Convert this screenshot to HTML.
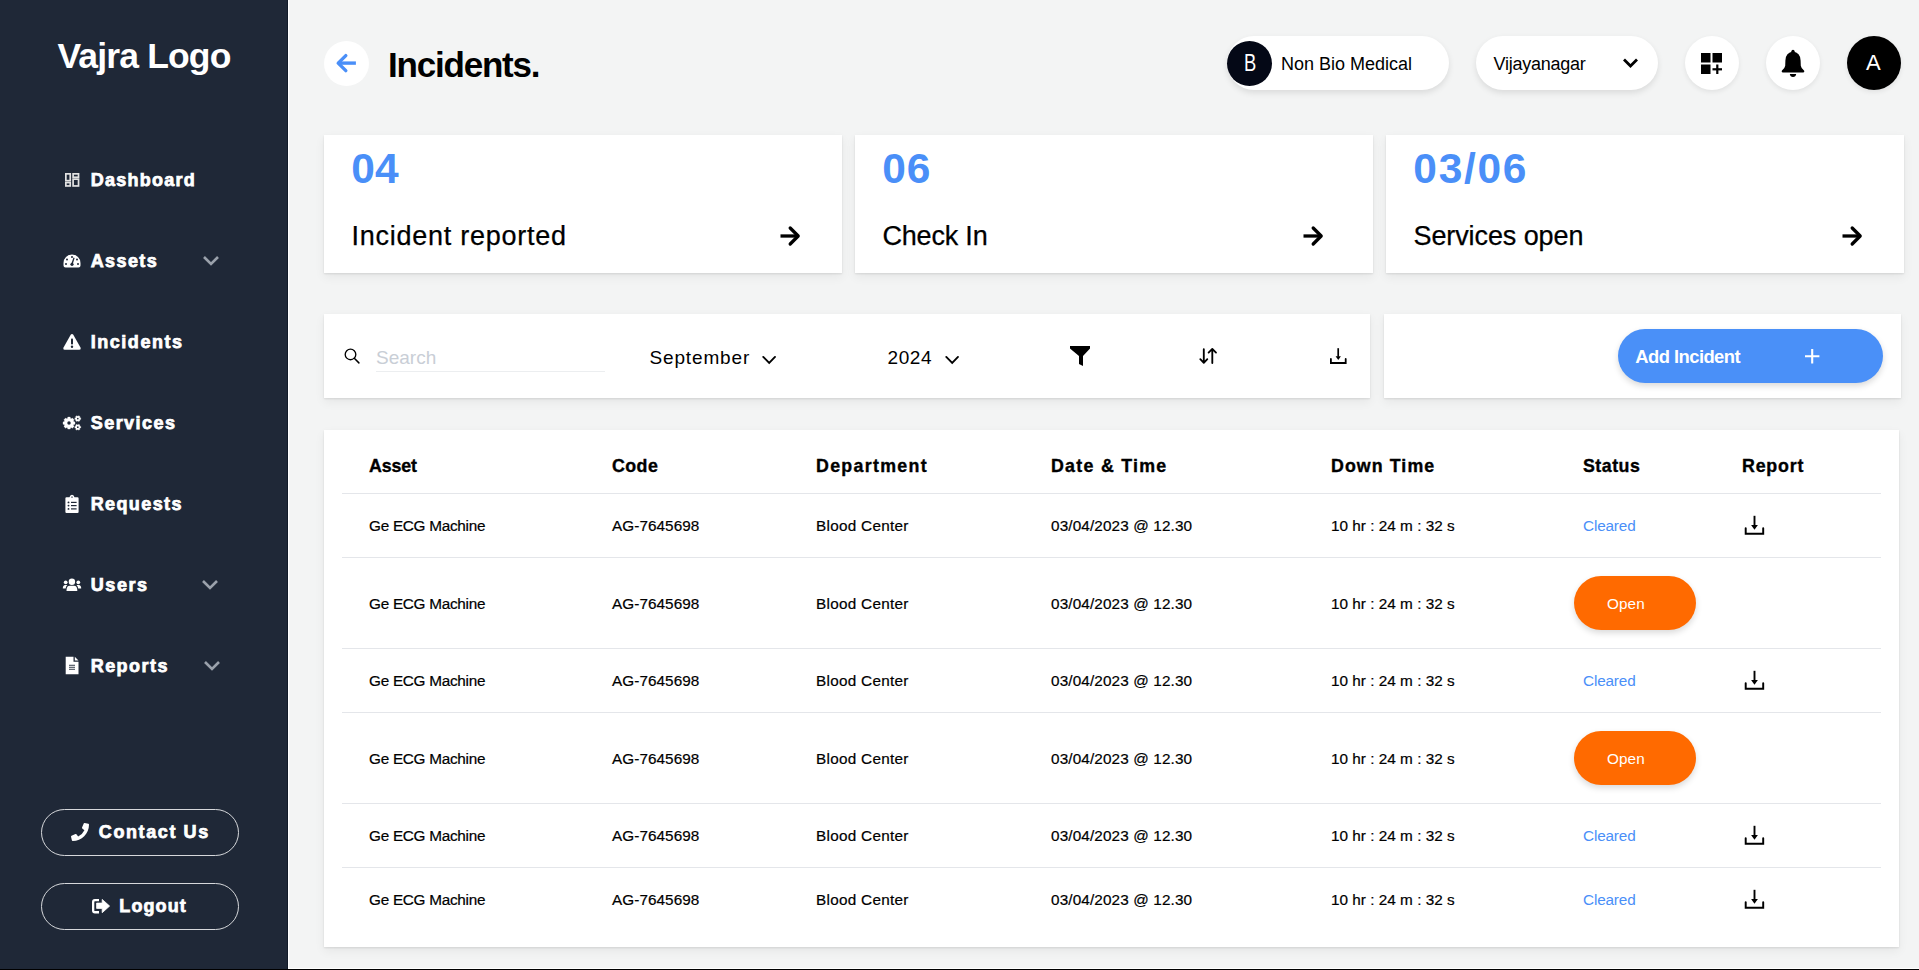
<!DOCTYPE html>
<html><head><meta charset="utf-8"><title>Incidents</title>
<style>
html,body{margin:0;padding:0;}
body{width:1919px;height:970px;overflow:hidden;position:relative;background:#f3f4f4;font-family:"Liberation Sans", sans-serif;}
.t{position:absolute;white-space:nowrap;}
.b{position:absolute;display:block;box-sizing:border-box;}
svg.b{overflow:visible;}
</style></head><body>
<div class="b" style="left:0px;top:0px;width:288px;height:970px;background:#1f2837;"></div><div class="b" style="left:287px;top:0px;width:1px;height:969px;background:#111a28;"></div><div class="b" style="left:288px;top:0px;width:1px;height:969px;background:#fff;"></div><div class="b" style="left:288px;top:968px;width:1631px;height:1px;background:#fff;"></div><div class="b" style="left:0px;top:969px;width:1919px;height:1px;background:#000;"></div><div class="t" style="left:57.5px;top:38.95px;font-size:35.5px;line-height:35.5px;font-weight:700;color:#fff;letter-spacing:-0.85px;">Vajra Logo</div><div class="t" style="left:90.7px;top:171.26px;font-size:18px;line-height:18px;font-weight:700;color:#fff;letter-spacing:1.25px;-webkit-text-stroke:0.75px #fff;">Dashboard</div><div class="t" style="left:90.7px;top:252.26px;font-size:18px;line-height:18px;font-weight:700;color:#fff;letter-spacing:1.4px;-webkit-text-stroke:0.75px #fff;">Assets</div><svg class="b" style="left:202px;top:254.7px;" width="18" height="12" viewBox="0 0 18 12"><path d="M2 2 L9 9 L16 2" fill="none" stroke="#9aa1ab" stroke-width="2.6" stroke-linecap="butt"/></svg><div class="t" style="left:90.7px;top:333.26px;font-size:18px;line-height:18px;font-weight:700;color:#fff;letter-spacing:1.54px;-webkit-text-stroke:0.75px #fff;">Incidents</div><div class="t" style="left:90.7px;top:414.26px;font-size:18px;line-height:18px;font-weight:700;color:#fff;letter-spacing:1.47px;-webkit-text-stroke:0.75px #fff;">Services</div><div class="t" style="left:90.7px;top:495.26px;font-size:18px;line-height:18px;font-weight:700;color:#fff;letter-spacing:1.39px;-webkit-text-stroke:0.75px #fff;">Requests</div><div class="t" style="left:90.7px;top:576.26px;font-size:18px;line-height:18px;font-weight:700;color:#fff;letter-spacing:1.6px;-webkit-text-stroke:0.75px #fff;">Users</div><svg class="b" style="left:201px;top:578.7px;" width="18" height="12" viewBox="0 0 18 12"><path d="M2 2 L9 9 L16 2" fill="none" stroke="#9aa1ab" stroke-width="2.6" stroke-linecap="butt"/></svg><div class="t" style="left:90.7px;top:657.26px;font-size:18px;line-height:18px;font-weight:700;color:#fff;letter-spacing:1.45px;-webkit-text-stroke:0.75px #fff;">Reports</div><svg class="b" style="left:202.8px;top:659.7px;" width="18" height="12" viewBox="0 0 18 12"><path d="M2 2 L9 9 L16 2" fill="none" stroke="#9aa1ab" stroke-width="2.6" stroke-linecap="butt"/></svg><svg class="b" style="left:64.6px;top:173px;" width="14.4" height="13.8" viewBox="0 0 14.4 13.8"><g fill="none" stroke="#e2e2e2" stroke-width="1.7"><rect x="0.85" y="0.85" width="4.4" height="6.8"/><rect x="8.1" y="0.85" width="5.45" height="3.4"/><rect x="0.85" y="9.55" width="4.4" height="3.4"/><rect x="8.1" y="6.15" width="5.45" height="6.8"/></g></svg><svg class="b" style="left:63px;top:254px;" width="18" height="14" viewBox="0 0 18 14"><path d="M9 0.5 A8.5 8.5 0 0 0 0.5 9 L0.5 11.5 Q0.5 13.5 2.5 13.5 L15.5 13.5 Q17.5 13.5 17.5 11.5 L17.5 9 A8.5 8.5 0 0 0 9 0.5 Z" fill="#fff"/><g fill="#1f2837"><circle cx="4" cy="5.5" r="1"/><circle cx="9" cy="3" r="1"/><circle cx="3" cy="10" r="1"/><circle cx="15" cy="10" r="1"/><circle cx="14" cy="5.5" r="1"/><path d="M10.5 3.5 L11.6 4 L9.8 10 L8.2 10 Z"/><circle cx="9" cy="10.3" r="1.6"/></g></svg><svg class="b" style="left:63px;top:333px;" width="18" height="18" viewBox="0 0 18 18"><path d="M9 1 Q9.8 1 10.3 1.8 L17.6 14.8 Q18.2 16.6 16.4 16.8 L1.6 16.8 Q-0.2 16.6 0.4 14.8 L7.7 1.8 Q8.2 1 9 1 Z" fill="#fff"/><rect x="8" y="5.5" width="2" height="6" rx="0.8" fill="#1f2837"/><circle cx="9" cy="13.8" r="1.2" fill="#1f2837"/></svg><svg class="b" style="left:58px;top:409px;" width="30" height="30" viewBox="0 0 30 30"><polygon points="15.66,12.59 16.98,12.91 16.98,15.29 15.66,15.61 15.37,16.32 16.07,17.49 14.39,19.17 13.22,18.47 12.51,18.76 12.19,20.08 9.81,20.08 9.49,18.76 8.78,18.47 7.61,19.17 5.93,17.49 6.63,16.32 6.34,15.61 5.02,15.29 5.02,12.91 6.34,12.59 6.63,11.88 5.93,10.71 7.61,9.03 8.78,9.73 9.49,9.44 9.81,8.12 12.19,8.12 12.51,9.44 13.22,9.73 14.39,9.03 16.07,10.71 15.37,11.88" fill="#fff" stroke="#fff" stroke-width="0.3" stroke-linejoin="round"/><circle cx="11" cy="14.1" r="1.75" fill="#1f2837"/><polygon points="21.92,8.72 22.75,8.81 22.75,10.39 21.92,10.48 21.62,11.00 21.96,11.76 20.59,12.55 20.10,11.88 19.50,11.88 19.01,12.55 17.64,11.76 17.98,11.00 17.68,10.48 16.85,10.39 16.85,8.81 17.68,8.72 17.98,8.20 17.64,7.44 19.01,6.65 19.50,7.32 20.10,7.32 20.59,6.65 21.96,7.44 21.62,8.20" fill="#fff" stroke="#fff" stroke-width="0.3" stroke-linejoin="round"/><circle cx="19.8" cy="9.6" r="0.85" fill="#1f2837"/><polygon points="21.92,17.32 22.75,17.41 22.75,18.99 21.92,19.08 21.62,19.60 21.96,20.36 20.59,21.15 20.10,20.48 19.50,20.48 19.01,21.15 17.64,20.36 17.98,19.60 17.68,19.08 16.85,18.99 16.85,17.41 17.68,17.32 17.98,16.80 17.64,16.04 19.01,15.25 19.50,15.92 20.10,15.92 20.59,15.25 21.96,16.04 21.62,16.80" fill="#fff" stroke="#fff" stroke-width="0.3" stroke-linejoin="round"/><circle cx="19.8" cy="18.2" r="0.85" fill="#1f2837"/></svg><svg class="b" style="left:65px;top:494px;" width="14" height="19" viewBox="0 0 14 19"><path d="M1.5 3.2 L4.5 3.2 Q5 0.7 7 0.7 Q9 0.7 9.5 3.2 L12.5 3.2 Q13.6 3.2 13.6 4.3 L13.6 17.9 Q13.6 19 12.5 19 L1.5 19 Q0.4 19 0.4 17.9 L0.4 4.3 Q0.4 3.2 1.5 3.2 Z" fill="#fff"/><g fill="#1f2837"><ellipse cx="7" cy="3.1" rx="0.9" ry="0.55"/><circle cx="3.5" cy="8.4" r="0.95"/><circle cx="3.5" cy="11.6" r="0.95"/><circle cx="3.5" cy="14.9" r="0.95"/><rect x="6" y="7.8" width="5.6" height="1.2"/><rect x="6" y="11" width="5.6" height="1.2"/><rect x="6" y="14.3" width="5.6" height="1.2"/></g></svg><svg class="b" style="left:63px;top:578px;" width="19" height="14" viewBox="0 0 19 14"><g fill="#fff"><circle cx="8.9" cy="3.8" r="3.2"/><circle cx="2.7" cy="4.3" r="1.85"/><circle cx="15.3" cy="4.3" r="1.85"/><path d="M3.5 13.1 Q3.3 7.8 6.8 7.8 L11 7.8 Q14.5 7.8 14.3 13.1 Z"/><path d="M-0.2 10.6 Q-0.2 7.1 2.3 7.1 L4.3 7.1 Q2.9 8.3 2.6 10.6 Z"/><path d="M18.2 10.6 Q18.2 7.1 15.7 7.1 L13.5 7.1 Q14.9 8.3 15.2 10.6 Z"/></g></svg><svg class="b" style="left:65px;top:656px;" width="14" height="19" viewBox="0 0 14 19"><path d="M0.7 0.7 L8.5 0.7 L8.5 5.8 L13.5 5.8 L13.5 18.3 L0.7 18.3 Z" fill="#fff"/><path d="M9.8 0.7 L13.5 4.5 L9.8 4.5 Z" fill="#fff"/><g fill="#1f2837"><rect x="4" y="8.8" width="6" height="0.9"/><rect x="4" y="10.8" width="6" height="0.9"/><rect x="4" y="12.8" width="6" height="0.9"/></g></svg><div class="b" style="left:41px;top:809px;width:198px;height:47px;border:1px solid #d6d8db;border-radius:24px;"></div><div class="b" style="left:41px;top:883px;width:198px;height:47px;border:1px solid #d6d8db;border-radius:24px;"></div><div class="t" style="left:98.8px;top:823.36px;font-size:18px;line-height:18px;font-weight:700;color:#fff;letter-spacing:1.6px;-webkit-text-stroke:0.75px #fff;">Contact Us</div><div class="t" style="left:119.3px;top:897.36px;font-size:18px;line-height:18px;font-weight:700;color:#fff;letter-spacing:1.1px;-webkit-text-stroke:0.75px #fff;">Logout</div><svg class="b" style="left:71px;top:823px;" width="18" height="18" viewBox="0 0 512 512"><path fill="#fff" d="M497.4 361.8l-112-48a24 24 0 0 0-28 6.9l-49.6 60.6A370.7 370.7 0 0 1 130.6 204.1l60.6-49.6a23.9 23.9 0 0 0 6.9-28l-48-112A24.2 24.2 0 0 0 122.6.6l-104 24A24 24 0 0 0 0 48c0 256.5 207.9 464 464 464a24 24 0 0 0 23.4-18.6l24-104a24.3 24.3 0 0 0-14-27.6z" transform="translate(512 0) scale(-1 1)"/></svg><svg class="b" style="left:88px;top:893px;" width="26" height="26" viewBox="0 0 26 26"><path d="M11 7.15 L6.9 7.15 Q5.15 7.15 5.15 8.9 L5.15 17.5 Q5.15 19.25 6.9 19.25 L11 19.25" fill="none" stroke="#fff" stroke-width="2.3"/><path d="M8.6 10.1 L14.2 10.1 L14.2 6.4 L21.6 13.05 L14.2 19.7 L14.2 15.4 L8.6 15.4 Z" fill="#fff" stroke="#fff" stroke-width="0.8" stroke-linejoin="round"/></svg><div class="b" style="left:289px;top:0px;width:1630px;height:968px;background:#f3f4f4;"></div><div class="b" style="left:324px;top:41px;width:45px;height:45px;background:#fff;border-radius:50%;"></div><svg class="b" style="left:326px;top:43px;" width="40" height="40" viewBox="0 0 40 40"><path d="M13 20.1 L29.9 20.1" fill="none" stroke="#4a8ff8" stroke-width="3.4"/><path d="M19.8 12.6 L12.2 20.1 L19.8 27.6" fill="none" stroke="#4a8ff8" stroke-width="3.4" stroke-linecap="round" stroke-linejoin="round"/></svg><div class="t" style="left:388px;top:46.77px;font-size:35px;line-height:35px;font-weight:700;color:#000;letter-spacing:-1.2px;">Incidents.</div><div class="b" style="left:1227px;top:36px;width:222px;height:54px;background:#fff;border-radius:27px;box-shadow:0 3px 6px rgba(0,0,0,0.10);"></div><div class="b" style="left:1227px;top:41px;width:45px;height:45px;background:#040816;border-radius:50%;"></div><div class="t" style="left:1243.9px;top:51.73px;font-size:23px;line-height:23px;font-weight:400;color:#fff;transform:scaleX(0.8);transform-origin:0 0;">B</div><div class="t" style="left:1281px;top:55.06px;font-size:18px;line-height:18px;font-weight:400;color:#000;">Non Bio Medical</div><div class="b" style="left:1476px;top:36px;width:182px;height:54px;background:#fff;border-radius:27px;box-shadow:0 3px 6px rgba(0,0,0,0.10);"></div><div class="t" style="left:1493.5px;top:54.76px;font-size:18px;line-height:18px;font-weight:400;color:#000;letter-spacing:-0.25px;">Vijayanagar</div><svg class="b" style="left:1622px;top:57px;" width="17" height="12" viewBox="0 0 17 12"><path d="M2 2.5 L8.5 9 L15 2.5" fill="none" stroke="#000" stroke-width="2.8"/></svg><div class="b" style="left:1685px;top:36px;width:54px;height:54px;background:#fff;border-radius:50%;box-shadow:0 2px 5px rgba(0,0,0,0.08);"></div><svg class="b" style="left:1701px;top:53px;" width="21" height="21" viewBox="0 0 21 21"><g fill="#000"><rect x="0" y="0" width="9.5" height="9.5"/><rect x="11.5" y="0" width="9.5" height="9.5"/><rect x="0" y="11.5" width="9.5" height="9.5"/><rect x="15.2" y="11.5" width="2.2" height="9.5"/><rect x="11.5" y="15.2" width="9.5" height="2.2"/></g></svg><div class="b" style="left:1766px;top:36px;width:54px;height:54px;background:#fff;border-radius:50%;box-shadow:0 2px 5px rgba(0,0,0,0.08);"></div><svg class="b" style="left:1780.6px;top:49px;" width="24" height="29" viewBox="0 0 24 29"><circle cx="12" cy="2.3" r="1.6" fill="#000"/><path fill="#000" d="M12 2.6 Q19.3 3.6 19.6 11.5 L19.8 16.8 Q20.2 19.6 23 21.4 Q23.6 22 23.2 22.8 Q23 23.4 22.2 23.4 L1.8 23.4 Q1 23.4 0.8 22.8 Q0.4 22 1 21.4 Q3.8 19.6 4.2 16.8 L4.4 11.5 Q4.7 3.6 12 2.6 Z M8.8 25 L15.2 25 Q14.8 28 12 28 Q9.2 28 8.8 25 Z"/></svg><div class="b" style="left:1847px;top:36px;width:54px;height:54px;background:#000;border-radius:50%;box-shadow:0 2px 5px rgba(0,0,0,0.08);"></div><div class="t" style="left:1866px;top:52.38px;font-size:22px;line-height:22px;font-weight:400;color:#fff;">A</div><div class="b" style="left:324px;top:135px;width:518px;height:138px;background:#fff;box-shadow:0 1px 2px rgba(0,0,0,0.10),0 4px 10px rgba(0,0,0,0.06);"></div><div class="t" style="left:351.3px;top:147.82px;font-size:42.5px;line-height:42.5px;font-weight:700;color:#4a8ff8;">04</div><div class="t" style="left:351.5px;top:223.04px;font-size:27px;line-height:27px;font-weight:400;color:#000;letter-spacing:0.75px;-webkit-text-stroke:0.25px #000;">Incident reported</div><svg class="b" style="left:770px;top:216px;" width="40" height="40" viewBox="0 0 40 40"><path d="M10.5 20 L27 20" fill="none" stroke="#000" stroke-width="3.3"/><path d="M20.2 12 L28.2 20 L20.2 28" fill="none" stroke="#000" stroke-width="3.3" stroke-linecap="round" stroke-linejoin="round"/></svg><div class="b" style="left:855px;top:135px;width:518px;height:138px;background:#fff;box-shadow:0 1px 2px rgba(0,0,0,0.10),0 4px 10px rgba(0,0,0,0.06);"></div><div class="t" style="left:882.3px;top:147.82px;font-size:42.5px;line-height:42.5px;font-weight:700;color:#4a8ff8;letter-spacing:0.8px;">06</div><div class="t" style="left:882.5px;top:223.04px;font-size:27px;line-height:27px;font-weight:400;color:#000;letter-spacing:-0.2px;-webkit-text-stroke:0.25px #000;">Check In</div><svg class="b" style="left:1292.7px;top:216px;" width="40" height="40" viewBox="0 0 40 40"><path d="M10.5 20 L27 20" fill="none" stroke="#000" stroke-width="3.3"/><path d="M20.2 12 L28.2 20 L20.2 28" fill="none" stroke="#000" stroke-width="3.3" stroke-linecap="round" stroke-linejoin="round"/></svg><div class="b" style="left:1386px;top:135px;width:518px;height:138px;background:#fff;box-shadow:0 1px 2px rgba(0,0,0,0.10),0 4px 10px rgba(0,0,0,0.06);"></div><div class="t" style="left:1413.3px;top:147.82px;font-size:42.5px;line-height:42.5px;font-weight:700;color:#4a8ff8;letter-spacing:1.7px;">03/06</div><div class="t" style="left:1413.5px;top:223.04px;font-size:27px;line-height:27px;font-weight:400;color:#000;letter-spacing:-0.1px;-webkit-text-stroke:0.25px #000;">Services open</div><svg class="b" style="left:1831.8px;top:216px;" width="40" height="40" viewBox="0 0 40 40"><path d="M10.5 20 L27 20" fill="none" stroke="#000" stroke-width="3.3"/><path d="M20.2 12 L28.2 20 L20.2 28" fill="none" stroke="#000" stroke-width="3.3" stroke-linecap="round" stroke-linejoin="round"/></svg><div class="b" style="left:324px;top:314px;width:1046px;height:84px;background:#fff;box-shadow:0 1px 2px rgba(0,0,0,0.10),0 4px 10px rgba(0,0,0,0.06);"></div><svg class="b" style="left:344px;top:348px;" width="16" height="16" viewBox="0 0 16 16"><circle cx="6.5" cy="6.4" r="5.3" fill="none" stroke="#000" stroke-width="1.35"/><path d="M10.3 10.3 L14.9 14.9" stroke="#000" stroke-width="1.5" stroke-linecap="round"/></svg><div class="t" style="left:376px;top:347.92px;font-size:19px;line-height:19px;font-weight:400;color:#c9ced6;">Search</div><div class="b" style="left:376px;top:371px;width:229px;height:1px;background:#eceef0;"></div><div class="t" style="left:649.5px;top:347.72px;font-size:19px;line-height:19px;font-weight:400;color:#000;letter-spacing:0.85px;">September</div><svg class="b" style="left:761px;top:355px;" width="16" height="10" viewBox="0 0 16 10"><path d="M2.25 1.9 L8.2 7.8 L14 1.9" fill="none" stroke="#000" stroke-width="1.9" stroke-linecap="round"/></svg><div class="t" style="left:887.5px;top:347.72px;font-size:19px;line-height:19px;font-weight:400;color:#000;letter-spacing:0.6px;">2024</div><svg class="b" style="left:944.3px;top:355px;" width="16" height="10" viewBox="0 0 16 10"><path d="M2.25 1.9 L8.2 7.8 L14 1.9" fill="none" stroke="#000" stroke-width="1.9" stroke-linecap="round"/></svg><svg class="b" style="left:1069px;top:345px;" width="22" height="22" viewBox="0 0 22 22"><path d="M1 1 L21 1 L21 3.5 L14 11 L14 21 L10 19 L10 11 L1 3.5 Z" fill="#000"/></svg><svg class="b" style="left:1193px;top:341px;" width="30" height="30" viewBox="0 0 30 30"><g fill="none" stroke="#000" stroke-width="1.85" stroke-linecap="round" stroke-linejoin="round"><path d="M10.8 8.2 L10.8 21.6 M7.3 18.2 L10.8 21.8 L14.3 18.2"/><path d="M19.3 22 L19.3 8.3 M15.6 11.6 L19.3 7.9 L23 11.6"/></g></svg><svg class="b" style="left:1323px;top:341px;" width="30" height="30" viewBox="0 0 30 30"><path d="M15.2 7.2 L15.2 15.8" fill="none" stroke="#000" stroke-width="1.7"/><path d="M12.6 15.2 L17.9 15.2 L15.25 18.9 Z" fill="#000"/><path d="M7.9 17.9 L7.9 22 L22.7 22 L22.7 17.9" fill="none" stroke="#000" stroke-width="1.8" stroke-linecap="round"/></svg><div class="b" style="left:1384px;top:314px;width:517px;height:84px;background:#fff;box-shadow:0 1px 2px rgba(0,0,0,0.10),0 4px 10px rgba(0,0,0,0.06);"></div><div class="b" style="left:1618px;top:329px;width:265px;height:54px;background:#4a90f8;border-radius:27px;box-shadow:0 3px 6px rgba(0,0,0,0.15);"></div><div class="t" style="left:1635.3px;top:347.82px;font-size:18.4px;line-height:18.4px;font-weight:700;color:#fff;letter-spacing:-0.55px;">Add Incident</div><svg class="b" style="left:1805px;top:349.3px;" width="14.4" height="14.4" viewBox="0 0 14.4 14.4"><path d="M7.2 0 L7.2 14.4 M0 7.2 L14.4 7.2" stroke="#fff" stroke-width="2.1"/></svg><div class="b" style="left:324px;top:430px;width:1575px;height:517px;background:#fff;box-shadow:0 1px 2px rgba(0,0,0,0.10),0 4px 10px rgba(0,0,0,0.06);"></div><div class="t" style="left:369px;top:458.13px;font-size:17.8px;line-height:17.8px;font-weight:700;color:#000;letter-spacing:-0.14px;-webkit-text-stroke:0.35px #000;">Asset</div><div class="t" style="left:612px;top:458.13px;font-size:17.8px;line-height:17.8px;font-weight:700;color:#000;letter-spacing:0.45000000000000007px;-webkit-text-stroke:0.35px #000;">Code</div><div class="t" style="left:816px;top:458.13px;font-size:17.8px;line-height:17.8px;font-weight:700;color:#000;letter-spacing:1.3099999999999998px;-webkit-text-stroke:0.35px #000;">Department</div><div class="t" style="left:1051px;top:458.13px;font-size:17.8px;line-height:17.8px;font-weight:700;color:#000;letter-spacing:1.2799999999999998px;-webkit-text-stroke:0.35px #000;">Date &amp; Time</div><div class="t" style="left:1331px;top:458.13px;font-size:17.8px;line-height:17.8px;font-weight:700;color:#000;letter-spacing:1.0799999999999998px;-webkit-text-stroke:0.35px #000;">Down Time</div><div class="t" style="left:1583px;top:458.13px;font-size:17.8px;line-height:17.8px;font-weight:700;color:#000;letter-spacing:0.49px;-webkit-text-stroke:0.35px #000;">Status</div><div class="t" style="left:1742px;top:458.13px;font-size:17.8px;line-height:17.8px;font-weight:700;color:#000;letter-spacing:0.8200000000000001px;-webkit-text-stroke:0.35px #000;">Report</div><div class="b" style="left:342px;top:493px;width:1539px;height:1px;background:#e4e6ea;"></div><div class="b" style="left:342px;top:557px;width:1539px;height:1px;background:#e4e6ea;"></div><div class="b" style="left:342px;top:648px;width:1539px;height:1px;background:#e4e6ea;"></div><div class="b" style="left:342px;top:712px;width:1539px;height:1px;background:#e4e6ea;"></div><div class="b" style="left:342px;top:803px;width:1539px;height:1px;background:#e4e6ea;"></div><div class="b" style="left:342px;top:867px;width:1539px;height:1px;background:#e4e6ea;"></div><div class="t" style="left:369px;top:517.85px;font-size:15.3px;line-height:15.3px;font-weight:400;color:#000;letter-spacing:-0.26px;-webkit-text-stroke:0.2px #000;">Ge ECG Machine</div><div class="t" style="left:612px;top:517.85px;font-size:15.3px;line-height:15.3px;font-weight:400;color:#000;letter-spacing:0.060000000000000005px;-webkit-text-stroke:0.2px #000;">AG-7645698</div><div class="t" style="left:816px;top:517.85px;font-size:15.3px;line-height:15.3px;font-weight:400;color:#000;letter-spacing:0.28px;-webkit-text-stroke:0.2px #000;">Blood Center</div><div class="t" style="left:1051px;top:517.85px;font-size:15.3px;line-height:15.3px;font-weight:400;color:#000;letter-spacing:0.13px;-webkit-text-stroke:0.2px #000;">03/04/2023 @ 12.30</div><div class="t" style="left:1331px;top:517.85px;font-size:15.3px;line-height:15.3px;font-weight:400;color:#000;letter-spacing:0.020000000000000004px;-webkit-text-stroke:0.2px #000;">10 hr : 24 m : 32 s</div><div class="t" style="left:1583px;top:517.85px;font-size:15.3px;line-height:15.3px;font-weight:400;color:#4a8ff8;letter-spacing:-0.15px;">Cleared</div><svg class="b" style="left:1740px;top:509.99999999999994px;" width="30" height="30" viewBox="0 0 30 30"><path d="M14.5 5.8 L14.5 15.8" fill="none" stroke="#000" stroke-width="1.9"/><path d="M11.1 15.1 L17.9 15.1 L14.5 19.8 Z" fill="#000"/><path d="M5.7 18.2 L5.7 23.8 L23.2 23.8 L23.2 18.2" fill="none" stroke="#000" stroke-width="1.95" stroke-linecap="round"/></svg><div class="t" style="left:369px;top:595.85px;font-size:15.3px;line-height:15.3px;font-weight:400;color:#000;letter-spacing:-0.26px;-webkit-text-stroke:0.2px #000;">Ge ECG Machine</div><div class="t" style="left:612px;top:595.85px;font-size:15.3px;line-height:15.3px;font-weight:400;color:#000;letter-spacing:0.060000000000000005px;-webkit-text-stroke:0.2px #000;">AG-7645698</div><div class="t" style="left:816px;top:595.85px;font-size:15.3px;line-height:15.3px;font-weight:400;color:#000;letter-spacing:0.28px;-webkit-text-stroke:0.2px #000;">Blood Center</div><div class="t" style="left:1051px;top:595.85px;font-size:15.3px;line-height:15.3px;font-weight:400;color:#000;letter-spacing:0.13px;-webkit-text-stroke:0.2px #000;">03/04/2023 @ 12.30</div><div class="t" style="left:1331px;top:595.85px;font-size:15.3px;line-height:15.3px;font-weight:400;color:#000;letter-spacing:0.020000000000000004px;-webkit-text-stroke:0.2px #000;">10 hr : 24 m : 32 s</div><div class="b" style="left:1574px;top:576.0px;width:122px;height:54px;background:#ff6a00;border-radius:27px;box-shadow:0 3px 6px rgba(0,0,0,0.15);"></div><div class="t" style="left:1607px;top:595.85px;font-size:15.3px;line-height:15.3px;font-weight:400;color:#fff;letter-spacing:0.1px;">Open</div><div class="t" style="left:369px;top:672.85px;font-size:15.3px;line-height:15.3px;font-weight:400;color:#000;letter-spacing:-0.26px;-webkit-text-stroke:0.2px #000;">Ge ECG Machine</div><div class="t" style="left:612px;top:672.85px;font-size:15.3px;line-height:15.3px;font-weight:400;color:#000;letter-spacing:0.060000000000000005px;-webkit-text-stroke:0.2px #000;">AG-7645698</div><div class="t" style="left:816px;top:672.85px;font-size:15.3px;line-height:15.3px;font-weight:400;color:#000;letter-spacing:0.28px;-webkit-text-stroke:0.2px #000;">Blood Center</div><div class="t" style="left:1051px;top:672.85px;font-size:15.3px;line-height:15.3px;font-weight:400;color:#000;letter-spacing:0.13px;-webkit-text-stroke:0.2px #000;">03/04/2023 @ 12.30</div><div class="t" style="left:1331px;top:672.85px;font-size:15.3px;line-height:15.3px;font-weight:400;color:#000;letter-spacing:0.020000000000000004px;-webkit-text-stroke:0.2px #000;">10 hr : 24 m : 32 s</div><div class="t" style="left:1583px;top:672.85px;font-size:15.3px;line-height:15.3px;font-weight:400;color:#4a8ff8;letter-spacing:-0.15px;">Cleared</div><svg class="b" style="left:1740px;top:665.0px;" width="30" height="30" viewBox="0 0 30 30"><path d="M14.5 5.8 L14.5 15.8" fill="none" stroke="#000" stroke-width="1.9"/><path d="M11.1 15.1 L17.9 15.1 L14.5 19.8 Z" fill="#000"/><path d="M5.7 18.2 L5.7 23.8 L23.2 23.8 L23.2 18.2" fill="none" stroke="#000" stroke-width="1.95" stroke-linecap="round"/></svg><div class="t" style="left:369px;top:750.85px;font-size:15.3px;line-height:15.3px;font-weight:400;color:#000;letter-spacing:-0.26px;-webkit-text-stroke:0.2px #000;">Ge ECG Machine</div><div class="t" style="left:612px;top:750.85px;font-size:15.3px;line-height:15.3px;font-weight:400;color:#000;letter-spacing:0.060000000000000005px;-webkit-text-stroke:0.2px #000;">AG-7645698</div><div class="t" style="left:816px;top:750.85px;font-size:15.3px;line-height:15.3px;font-weight:400;color:#000;letter-spacing:0.28px;-webkit-text-stroke:0.2px #000;">Blood Center</div><div class="t" style="left:1051px;top:750.85px;font-size:15.3px;line-height:15.3px;font-weight:400;color:#000;letter-spacing:0.13px;-webkit-text-stroke:0.2px #000;">03/04/2023 @ 12.30</div><div class="t" style="left:1331px;top:750.85px;font-size:15.3px;line-height:15.3px;font-weight:400;color:#000;letter-spacing:0.020000000000000004px;-webkit-text-stroke:0.2px #000;">10 hr : 24 m : 32 s</div><div class="b" style="left:1574px;top:731.0px;width:122px;height:54px;background:#ff6a00;border-radius:27px;box-shadow:0 3px 6px rgba(0,0,0,0.15);"></div><div class="t" style="left:1607px;top:750.85px;font-size:15.3px;line-height:15.3px;font-weight:400;color:#fff;letter-spacing:0.1px;">Open</div><div class="t" style="left:369px;top:827.85px;font-size:15.3px;line-height:15.3px;font-weight:400;color:#000;letter-spacing:-0.26px;-webkit-text-stroke:0.2px #000;">Ge ECG Machine</div><div class="t" style="left:612px;top:827.85px;font-size:15.3px;line-height:15.3px;font-weight:400;color:#000;letter-spacing:0.060000000000000005px;-webkit-text-stroke:0.2px #000;">AG-7645698</div><div class="t" style="left:816px;top:827.85px;font-size:15.3px;line-height:15.3px;font-weight:400;color:#000;letter-spacing:0.28px;-webkit-text-stroke:0.2px #000;">Blood Center</div><div class="t" style="left:1051px;top:827.85px;font-size:15.3px;line-height:15.3px;font-weight:400;color:#000;letter-spacing:0.13px;-webkit-text-stroke:0.2px #000;">03/04/2023 @ 12.30</div><div class="t" style="left:1331px;top:827.85px;font-size:15.3px;line-height:15.3px;font-weight:400;color:#000;letter-spacing:0.020000000000000004px;-webkit-text-stroke:0.2px #000;">10 hr : 24 m : 32 s</div><div class="t" style="left:1583px;top:827.85px;font-size:15.3px;line-height:15.3px;font-weight:400;color:#4a8ff8;letter-spacing:-0.15px;">Cleared</div><svg class="b" style="left:1740px;top:820.0px;" width="30" height="30" viewBox="0 0 30 30"><path d="M14.5 5.8 L14.5 15.8" fill="none" stroke="#000" stroke-width="1.9"/><path d="M11.1 15.1 L17.9 15.1 L14.5 19.8 Z" fill="#000"/><path d="M5.7 18.2 L5.7 23.8 L23.2 23.8 L23.2 18.2" fill="none" stroke="#000" stroke-width="1.95" stroke-linecap="round"/></svg><div class="t" style="left:369px;top:891.85px;font-size:15.3px;line-height:15.3px;font-weight:400;color:#000;letter-spacing:-0.26px;-webkit-text-stroke:0.2px #000;">Ge ECG Machine</div><div class="t" style="left:612px;top:891.85px;font-size:15.3px;line-height:15.3px;font-weight:400;color:#000;letter-spacing:0.060000000000000005px;-webkit-text-stroke:0.2px #000;">AG-7645698</div><div class="t" style="left:816px;top:891.85px;font-size:15.3px;line-height:15.3px;font-weight:400;color:#000;letter-spacing:0.28px;-webkit-text-stroke:0.2px #000;">Blood Center</div><div class="t" style="left:1051px;top:891.85px;font-size:15.3px;line-height:15.3px;font-weight:400;color:#000;letter-spacing:0.13px;-webkit-text-stroke:0.2px #000;">03/04/2023 @ 12.30</div><div class="t" style="left:1331px;top:891.85px;font-size:15.3px;line-height:15.3px;font-weight:400;color:#000;letter-spacing:0.020000000000000004px;-webkit-text-stroke:0.2px #000;">10 hr : 24 m : 32 s</div><div class="t" style="left:1583px;top:891.85px;font-size:15.3px;line-height:15.3px;font-weight:400;color:#4a8ff8;letter-spacing:-0.15px;">Cleared</div><svg class="b" style="left:1740px;top:884.0px;" width="30" height="30" viewBox="0 0 30 30"><path d="M14.5 5.8 L14.5 15.8" fill="none" stroke="#000" stroke-width="1.9"/><path d="M11.1 15.1 L17.9 15.1 L14.5 19.8 Z" fill="#000"/><path d="M5.7 18.2 L5.7 23.8 L23.2 23.8 L23.2 18.2" fill="none" stroke="#000" stroke-width="1.95" stroke-linecap="round"/></svg>
</body></html>
